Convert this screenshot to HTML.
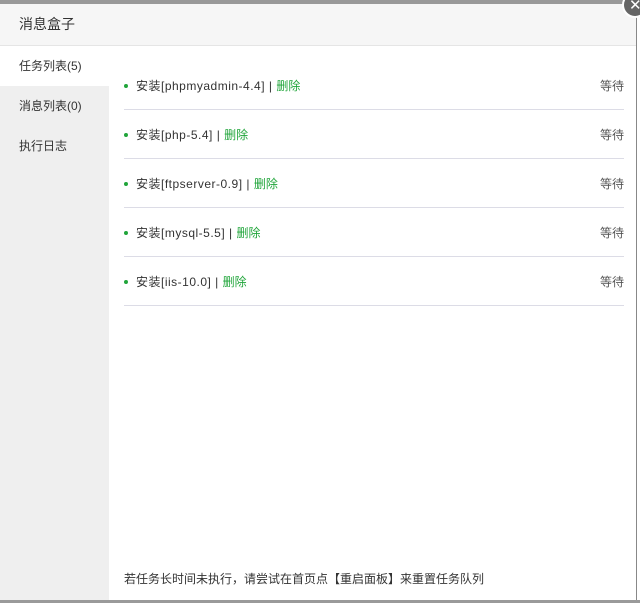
<!DOCTYPE html>
<html><head><meta charset="utf-8"><style>
*{margin:0;padding:0;box-sizing:border-box}
body{width:640px;height:603px;overflow:hidden;background:#fff;font-family:"Liberation Sans","Noto Sans CJK SC",sans-serif;font-size:12px;color:#333;position:relative}
.top{position:absolute;left:0;top:0;width:640px;height:4px;background:#999}
.hdr{position:absolute;left:0;top:4px;width:636px;height:42px;background:#f6f6f6;border-bottom:1px solid #e5e5e5;font-size:14px;line-height:41px;padding-left:19px;color:#333}
.side{position:absolute;left:0;top:46px;width:109px;height:554px;background:#efefef}
.tab{position:absolute;left:0;width:109px;height:40px;line-height:40px;padding-left:19px;font-size:12px;color:#333}
.row{position:absolute;left:124px;width:500px;height:49px;border-bottom:1px solid #dcdce6}
.row span.t{position:absolute;left:12px;top:1px;line-height:49px;letter-spacing:0.5px}
.row i{position:absolute;left:0;top:23px;width:4px;height:4px;border-radius:50%;background:#20a53a}
.row b{font-weight:normal;color:#20a53a;letter-spacing:0}
.row .w{position:absolute;right:0;top:1px;line-height:49px;color:#555}
.foot{position:absolute;left:124px;top:570px;font-size:12px;color:#333}
.rb{position:absolute;right:0;top:4px;width:4px;height:596px;background:#fff;border-left:1px solid #888}
.bot{position:absolute;left:0;top:600px;width:640px;height:3px;background:#9a9a9a}
.cls{position:absolute;left:622px;top:-8px;width:26px;height:26px;border-radius:50%;background:#666;border:2px solid #fff;color:#fff;font-size:15px;line-height:24px;padding-left:5px}
</style></head><body>
<div class="top"></div>
<div class="hdr">消息盒子</div>
<div class="side"></div>
<div class="tab" style="top:46px;background:#fff">任务列表(5)</div>
<div class="tab" style="top:86px">消息列表(0)</div>
<div class="tab" style="top:126px">执行日志</div>
<div class="row" style="top:61px"><i></i><span class="t">安装[phpmyadmin-4.4] | <b>删除</b></span><span class="w">等待</span></div>
<div class="row" style="top:110px"><i></i><span class="t">安装[php-5.4] | <b>删除</b></span><span class="w">等待</span></div>
<div class="row" style="top:159px"><i></i><span class="t">安装[ftpserver-0.9] | <b>删除</b></span><span class="w">等待</span></div>
<div class="row" style="top:208px"><i></i><span class="t">安装[mysql-5.5] | <b>删除</b></span><span class="w">等待</span></div>
<div class="row" style="top:257px"><i></i><span class="t">安装[iis-10.0] | <b>删除</b></span><span class="w">等待</span></div>
<div class="foot">若任务长时间未执行，请尝试在首页点【重启面板】来重置任务队列</div>
<div class="rb"></div>
<div class="bot"></div>
<div class="cls">✕</div>
</body></html>
